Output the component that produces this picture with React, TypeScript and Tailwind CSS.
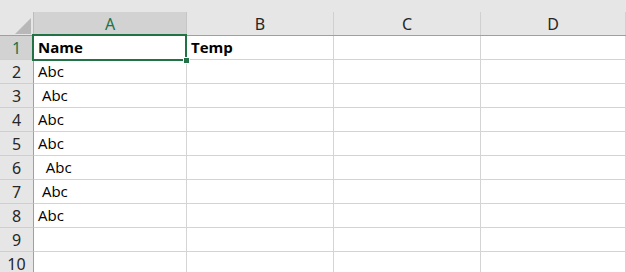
const COLS = ['A', 'B', 'C', 'D']

const rows: [string, string][] = [
  ['Name', 'Temp'],
  ['Abc', ''],
  [' Abc', ''],
  ['Abc', ''],
  ['Abc', ''],
  ['  Abc', ''],
  [' Abc', ''],
  ['Abc', ''],
  ['', ''],
  ['', ''],
]

const colWidth = ['w-[153px]', 'w-[147px]', 'w-[147px]', 'flex-1']

export default function App() {
  return (
    <div className="h-[272px] w-[626px] overflow-hidden bg-white font-['Open_Sans',sans-serif] text-[15px] text-black">
      {/* top strip */}
      <div className="h-[12px] bg-[#e6e6e6]" />

      {/* column headers */}
      <div className="flex h-[24px] border-b border-[#9f9f9f] bg-[#e6e6e6]">
        <div className="relative w-[34px] shrink-0 border-r border-[#bdbdbd]">
          <svg className="absolute left-[15px] top-[6px]" width="16" height="16" viewBox="0 0 16 16">
            <polygon points="16,0 16,16 0,16" fill="#b8b8b8" />
          </svg>
        </div>
        {COLS.map((c, i) => (
          <div
            key={c}
            className={`${colWidth[i]} flex shrink-0 items-center justify-center border-r font-['Noto_Sans',sans-serif] text-[16px] ${
              i === 0 ? 'border-[#c6c6c6] bg-[#d2d2d2] text-[#217346]' : 'border-[#d0d0d0] text-[#262626]'
            }`}
          >
            {c}
          </div>
        ))}
      </div>

      {/* grid rows */}
      {rows.map((r, ri) => (
        <div key={ri} className="flex h-[24px]">
          <div
            className={`flex w-[34px] shrink-0 items-center justify-center border-b border-r border-b-[#cfcfcf] border-r-[#9f9f9f] font-['Noto_Sans',sans-serif] text-[16px] ${
              ri === 0 ? 'bg-[#d2d2d2] text-[#217346]' : 'bg-[#e6e6e6] text-[#262626]'
            }`}
          >
            {ri + 1}
          </div>
          {COLS.map((c, ci) => (
            <div
              key={c}
              className={`${colWidth[ci]} relative flex shrink-0 items-center whitespace-pre border-b border-r border-[#d4d4d4] pl-[4px] ${
                ri === 0 ? 'font-bold' : ''
              }`}
            >
              {ci < 2 ? r[ci] : ''}
              {ri === 0 && ci === 0 && (
                <div className="absolute left-[-2px] top-[-2px] z-10 h-[27px] w-[155px] border-2 border-[#217346]">
                  <div className="absolute bottom-[-5px] right-[-5px] h-[7px] w-[7px] border border-white bg-[#217346]" />
                </div>
              )}
            </div>
          ))}
        </div>
      ))}
    </div>
  )
}
